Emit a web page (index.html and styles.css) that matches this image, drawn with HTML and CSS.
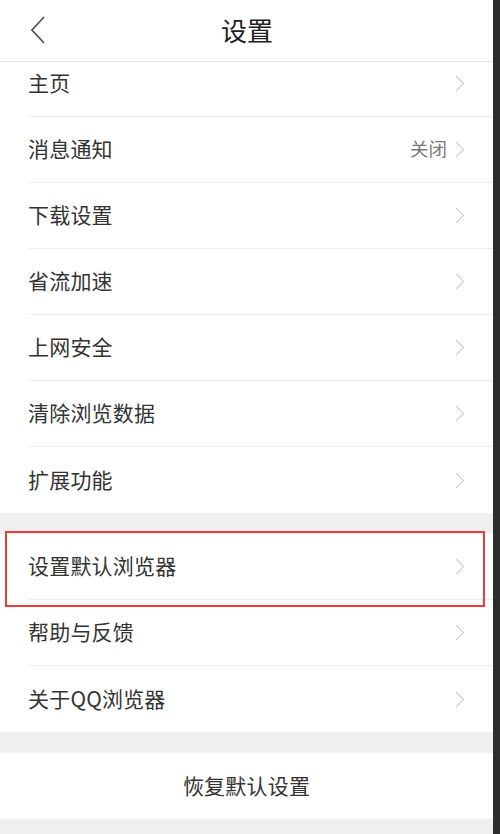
FILE: index.html
```html
<!DOCTYPE html>
<html lang="zh">
<head>
<meta charset="utf-8">
<title>设置</title>
<link rel="stylesheet" href="styles.css">
</head>
<body>
<div class="screen">
  <div class="app">
    <header class="topbar">
      <span class="back">
        <svg width="16" height="30" viewBox="0 0 16 30"><path d="M14 2 L2 15 L14 28" fill="none" stroke="#555" stroke-width="1.8"/></svg>
      </span>
      <h1 class="title">设置</h1>
    </header>
    <div class="viewport">
      <div class="list">
        <section class="group">
          <div class="row"><span class="label">主页</span><span class="chev"></span></div>
          <div class="row"><span class="label">消息通知</span><span class="value">关闭</span><span class="chev"></span></div>
          <div class="row"><span class="label">下载设置</span><span class="chev"></span></div>
          <div class="row"><span class="label">省流加速</span><span class="chev"></span></div>
          <div class="row"><span class="label">上网安全</span><span class="chev"></span></div>
          <div class="row"><span class="label">清除浏览数据</span><span class="chev"></span></div>
          <div class="row last"><span class="label">扩展功能</span><span class="chev"></span></div>
        </section>
        <section class="group">
          <div class="row marked"><span class="label">设置默认浏览器</span><span class="chev"></span><span class="mark"></span></div>
          <div class="row"><span class="label">帮助与反馈</span><span class="chev"></span></div>
          <div class="row last"><span class="label">关于QQ浏览器</span><span class="chev"></span></div>
        </section>
        <section class="group">
          <div class="row center last"><span class="label">恢复默认设置</span></div>
        </section>
      </div>
    </div>
  </div>
  <div class="edge"></div>
</div>
</body>
</html>
```
FILE: styles.css
```css
html, body {
  margin: 0;
  padding: 0;
  height: 100%;
  background: #efefef;
  font-family: "Noto Sans CJK SC", "Noto Sans", sans-serif;
}
.screen {
  display: flex;
  height: 834px;
  overflow: hidden;
}
.app {
  flex: 1;
  display: flex;
  flex-direction: column;
  background: #efefef;
  min-width: 0;
}
.edge {
  width: 7px;
  background: #2c2c2c;
}
.topbar {
  height: 61px;
  flex: none;
  background: #fff;
  border-bottom: 1px solid #e6e6e6;
  display: flex;
  align-items: center;
  justify-content: center;
  position: relative;
  z-index: 1;
}
.back {
  position: absolute;
  left: 30px;
  top: 15px;
  display: block;
  line-height: 0;
}
.title {
  margin: 0;
  font-size: 26px;
  font-weight: 400;
  color: #222;
  line-height: 1;
  padding-left: 1px;
  padding-bottom: 2px;
}
.viewport {
  flex: 1;
  overflow: hidden;
}
.list {
  margin-top: -11px;
  display: flex;
  flex-direction: column;
  gap: 21px;
}
.group {
  background: #fff;
  padding-left: 28px;
}
.row {
  height: 66px;
  box-sizing: border-box;
  border-bottom: 1px solid #eeeeee;
  display: flex;
  align-items: center;
  padding-right: 29px;
  padding-bottom: 3px;
  position: relative;
}
.row.last {
  border-bottom: none;
}
.label {
  flex: 1;
  font-size: 21px;
  color: #333;
  letter-spacing: 0.2px;
}
.value {
  font-size: 18.5px;
  color: #7a7a7a;
  margin-right: 4px;
}
.chev {
  width: 10px;
  height: 10px;
  border-top: 1.5px solid #c6c6c6;
  border-right: 1.5px solid #c6c6c6;
  transform: rotate(45deg);
  margin-right: 2px;
  margin-top: 3px;
  flex: none;
}
.row.center {
  justify-content: center;
  margin-left: -28px;
  padding-right: 0;
}
.row.center .label {
  flex: none;
}
.mark {
  position: absolute;
  left: -23px;
  top: -3px;
  width: 480px;
  height: 76px;
  box-sizing: border-box;
  border: 2px solid #ee3b3b;
}
```
